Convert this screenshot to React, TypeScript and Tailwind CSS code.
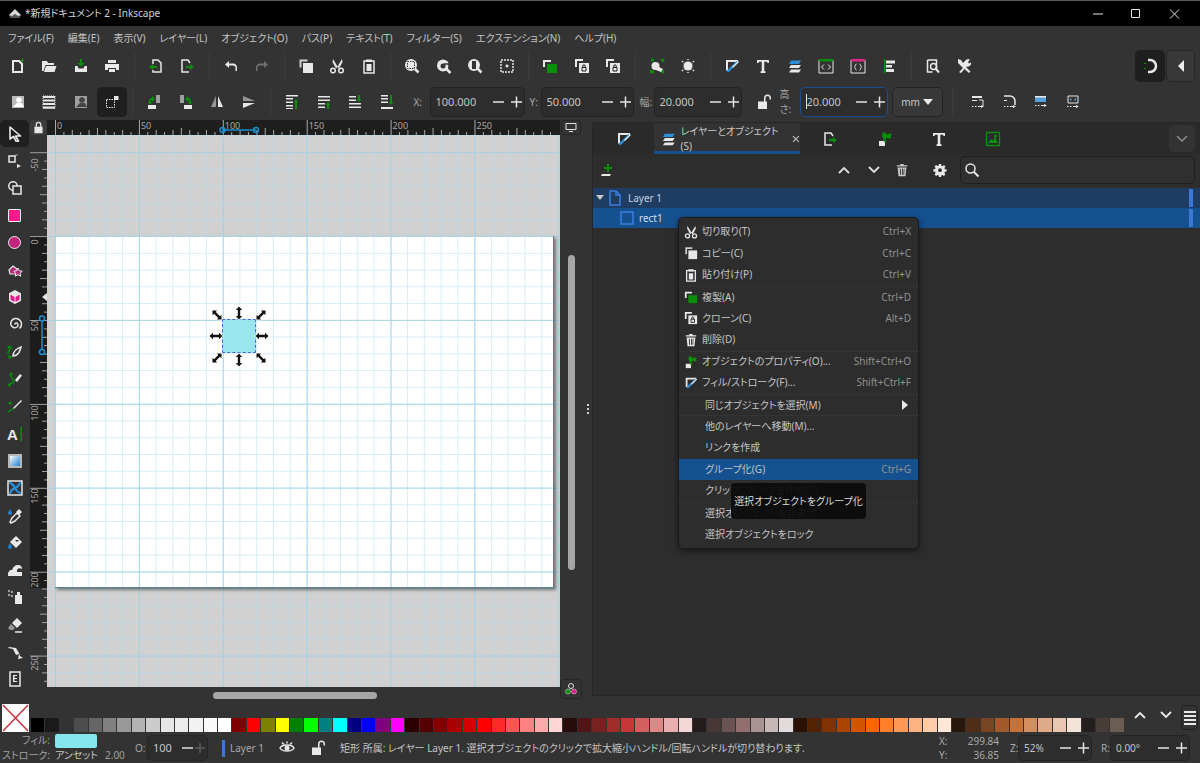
import type { ReactNode } from 'react';

// small 16x16 drawing wrapper, most toolbar icons go through this
function Ico({ children, s = 16, className = 'text-[#e8e8e8]' }: { children: ReactNode; s?: number; className?: string }) {
    return (
        <svg width={s} height={s} viewBox="0 0 16 16" fill="currentColor" className={className}>
            {children}
        </svg>
    );
}

const G = '#0a8f0a';
const line = { fill: 'none', stroke: 'currentColor', strokeWidth: 1.5 };

const icons: Record<string, ReactNode> = {
    newDoc: <><path d="M3 3h6l3 3v8H3z" {...line} strokeWidth={2} /><path d="M12.500 0l.8 1.700 1.700.8-1.700.8-.8 1.700-.8-1.700-1.700-.8 1.700-.8z" fill={G} /></>,
    open: <path d="M1 3h5l1 2h6v2H4.500L2.500 13H1zM5 8h10.500l-2 6H3z" />,
    save: <><path d="M7 1h2v4h2.500L8 8.500 4.500 5H7z" fill={G} /><path d="M2 8h2.500l1 2.500h5l1-2.500H14v6H2z" /></>,
    print: <path d="M4 2h8v3H4zM1 6h14v6h-3v-2H4v2H1zM5 11h6v3H5z" />,
    importDoc: <><path d="M5 6V2h5l3 3v9H5v-2" {...line} /><path d="M1 9l4-3v2h4v2H5v2z" fill={G} /></>,
    exportDoc: <><path d="M11 5l-2-3H3v12h7" {...line} /><path d="M15 9l-4-3v2H7v2h4v2z" fill={G} /></>,
    undo: <path d="M6 3L2 6.500 6 10V7.500h4a2.500 2.500 0 0 1 2.500 2.500v3H14v-3a4 4 0 0 0-4-4.500H6z" />,
    copy: <><path d="M1.500 1.500h8v2H3.500v6h-2z" opacity=".85" /><path d="M5 5h10v10H5z" /></>,
    cut: <><path d="M4 1l4.500 7.500L13 1l.5 3-3.500 6.500L8.500 9 7 10.500 3.500 4z" /><circle cx="4" cy="12.500" r="2.300" {...line} /><circle cx="12" cy="12.500" r="2.300" {...line} /></>,
    paste: <><path d="M3 3h10v12H3z" {...line} /><path d="M5 1.500h6V4H5zM5.500 6h5v7h-5z" /></>,
    zoomSel: <><circle cx="7" cy="7" r="6" /><path d="M10.500 10.500l4 4" {...line} strokeWidth={2.500} /><path d="M3.500 3.500h7v7h-7z" fill="none" stroke="#333" strokeDasharray="1.500 1" /></>,
    zoomDraw: <><circle cx="7" cy="7.500" r="6" /><path d="M10.500 11l4 4" {...line} strokeWidth={2.500} /><circle cx="7" cy="8" r="2.500" fill="#333" /><path d="M8 6h5v5" {...line} stroke="#333" /></>,
    zoomPage: <><circle cx="7" cy="7" r="6" /><path d="M10.500 10.500l4 4" {...line} strokeWidth={2.500} /><path d="M5 3h4v8H5z" fill="#333" /></>,
    zoomCenter: <><path d="M2 2h12v12H2z" {...line} strokeDasharray="2 1" /><path d="M6.500 8h3M8 6.500v3" {...line} /></>,
    dup: <><path d="M1 2h8v2H3v5H1z" /><path d="M5 6h10v9H5z" fill={G} /></>,
    clone: <><path d="M1 1h8v2H3v6H1z" /><path d="M5 5h10v10H5z" /><path d="M8 9.500h4V13H8zM8.800 9.500V8a1.200 1.200 0 0 1 2.400 0v1.500" fill="none" stroke="#222" strokeWidth="1" /></>,
    unclone: <><circle cx="6.500" cy="8" r="4" /><path d="M2 2h3M12 2h2v2M2 12v2h3M12 14h2v-2" stroke={G} strokeWidth="2.500" fill="none" /><path d="M8 8l6 3-2 3-5-2z" /></>,
    groupSel: <><circle cx="8" cy="8" r="4.500" /><path d="M2 3l2 2M14 3l-2 2M2 13l2-2M14 13l-2-2M8 1v1M8 14v1" {...line} strokeDasharray="1.500 1" /></>,
    fillStroke: <><path d="M2 2h12v2H4v8.500H2z" /><path d="M3 14.500l2.500-1L14 4.500 12.500 3 4 11.500z" fill="#2a8fd8" /><path d="M8 9l6-6 1 1-6 6z" /></>,
    text: <path d="M2 2h12v3h-1.500l-.5-1.300H9.300V13l1.200.5V15h-5v-1.500l1.200-.5V3.700H4L3.500 5H2z" />,
    layers: <><path d="M4 2.500h10L12 6H2z" fill="#2a8fd8" /><path d="M4 7h10l-2 3H2zM4 11.500h10L12 14.500H2z" /></>,
    xml: <><path d="M1 2h14v13H1z" {...line} strokeWidth={1} /><path d="M1 1h14v2.500H1z" fill={G} /><path d="M6 6.500L3.500 9 6 11.500M10 6.500L12.500 9 10 11.500" {...line} strokeWidth={1} /></>,
    css: <><path d="M1 2h14v13H1z" {...line} strokeWidth={1} /><path d="M1 1h14v2.500H1z" fill="#e0288a" /><path d="M6.500 6c-1.500 0-1 3-2 3 1 0 .5 3 2 3M9.500 6c1.500 0 1 3 2 3-1 0-.5 3-2 3" {...line} strokeWidth={1} /></>,
    align: <><path d="M3 1h1.500v14H3z" fill={G} /><path d="M5 2.500h9v3H5zM5 7h6v2.500H5zM5 11h8v3H5z" /></>,
    find: <><path d="M2.500 2h9v9" {...line} /><path d="M2.500 2v12h5" {...line} /><circle cx="8.500" cy="8.500" r="3" {...line} /><path d="M10.500 10.500l3.500 4" {...line} strokeWidth={2} /></>,
    prefs: <path d="M2 1l3 1 2 3 2-2c1-2 3-2 5-1.500L12 4l1 1.500 2-1c.5 2-1 4-3 4l-2 .5 4.500 4.500-1.500 1.500L8.500 11l-3 3.500c-1 1-2.500 0-2-1L7 10 4 7 2 5z" />,
    snap: <><path d="M8 2a6 6 0 0 1 0 12" {...line} strokeWidth={2.500} /><path d="M8 2H6M8 14H6" {...line} strokeWidth={2.500} /><path d="M3 5v1M3 10v1" stroke={G} strokeWidth="2" /><text x="1.500" y="10" fontSize="5" fill="#ddd" /></>,
    selectAll: <><path d="M2 2h12v12H2z" opacity=".75" /><circle cx="9" cy="6" r="2.800" fill="#fff" /><path d="M3 13l4-4h5l2 4z" fill="#fff" /></>,
    selectLayer: <><path d="M2 2h12v2H2zM2 5.500h12v2H2zM2 9h12v2H2zM2 12.500h12v2H2z" /><path d="M2 2h12v12.500H2z" fill="none" stroke="#e8e8e8" strokeDasharray="1 1" /></>,
    deselect: <><path d="M2 2h12v12H2z" opacity=".6" /><circle cx="9" cy="6" r="2.800" fill="#444" /><path d="M3 13l4-4h5l2 4z" fill="#444" /></>,
    touch: <><path d="M2.500 5.500h8v8h-8z" fill="none" stroke="currentColor" strokeDasharray="1.500 1" /><path d="M10 2h4.500v4H10z" /></>,
    rotL: <><path d="M10 1h4v8h-4z" opacity=".6" /><path d="M2 11h8v4H2z" /><path d="M3 8.500V7c0-2 1-3 3-3V2l3 3-3 3V6c-1 0-1 .5-1 1v1.500h1.500l-2.500 2-2.500-2z" fill={G} /></>,
    rotR: <><path d="M2 1h4v8H2z" opacity=".6" /><path d="M6 11h8v4H6z" /><path d="M13 8.500V7c0-2-1-3-3-3V2L7 5l3 3V6c1 0 1 .5 1 1v1.500H9.500l2.500 2 2.500-2z" fill={G} /></>,
    flipH: <><path d="M7 2v11H2z" opacity=".55" /><path d="M9 2v11h5z" /></>,
    flipV: <><path d="M2 7h12L2 2z" opacity=".55" /><path d="M2 9h12L2 14z" /></>,
    top: <><path d="M2 1h12v1.500H2zM2 4h7v1.500H2zM2 7.500h7V9H2zM2 11h7v1.500H2zM2 14h7v1H2z" /><path d="M12 5l2.500 3H13v7h-2V8H9.500z" fill={G} /></>,
    up: <><path d="M2 2h12v1.500H2zM2 5.500h12V7H2zM2 9h7v1.500H2zM2 12.500h7V14H2z" /><path d="M12 8l2.500 3H13v4h-2v-4H9.500z" fill={G} /></>,
    down: <><path d="M2 2h7v1.500H2zM2 5.500h7V7H2zM2 9h12v1.500H2zM2 12.500h12V14H2z" /><path d="M12 8L9.500 5H11V1h2v4h1.500z" fill={G} /></>,
    bottom: <><path d="M2 1h7v1.500H2zM2 4h7v1.500H2zM2 7.500h7V9H2zM2 13h12v2H2z" /><path d="M12 11L9.500 8H11V1h2v7h1.500z" fill={G} /></>,
    lock: <path d="M3 7h10v8H3zM4.500 7V4.500a3.500 3.500 0 0 1 7 0V7H10V4.500a2 2 0 0 0-4 0V7z" />,
    unlock: <path d="M2 7.500h9v7.500H2zM8 7.500V4a3.500 3.500 0 0 1 7 0v1.500h-1.500V4a2 2 0 0 0-4 0v3.500z" />,
    scaleA: <><path d="M2 2h10v2H2z" /><path d="M2 6h5v1H2z" /><path d="M9 6h4v6" {...line} strokeWidth={1} /><path d="M2 12h1.500v1H2zM5 12h1.500v1H5zM8 12h3v-1l3 1.500-3 1.500v-1H8z" /></>,
    scaleB: <><path d="M2 2h6a5 5 0 0 1 5 5v4" {...line} /><path d="M2 6h3v1H2zM2 12h1.500v1H2zM5 12h1.500v1H5zM8 12h3v-1l3 1.500-3 1.500v-1H8z" /></>,
    scaleC: <><path d="M2 2h11v6H2z" fill="#5aa0d8" /><path d="M2 2h11v1.500H2z" /><path d="M2 11h1.500v1H2zM5 11h1.500v1H5zM8 11h3v-1l3 1.500-3 1.500v-1H8z" /></>,
    scaleD: <><path d="M3 2h10v7H3z" {...line} strokeWidth={1} /><path d="M5 4l2 1.500L5 7zM11 4L9 5.500 11 7z" fill="#5aa0d8" /><path d="M2 12h1.500v1H2zM5 12h1.500v1H5zM8 12h3v-1l3 1.500-3 1.500v-1H8z" /></>,
    wrench: <><path d="M2 10h6v5H2z" /><path d="M6 1l3 1 1 2 2-1.500 3 .5-1.500 2 1 2-2.500 .5-2-1-1.500 1.500 1 3-2 .5-1-3.500L5 5z" fill={G} /></>,
    image: <><path d="M1.500 1.500h13v13h-13z" fill="none" stroke={G} strokeWidth="1.300" /><path d="M3 12l3-4 2 2 2-4 3 6z" fill={G} /><circle cx="10.500" cy="5" r="1.500" fill={G} /></>,
    addLayer: <><path d="M2 12h9l-1 2H1z" /><path d="M7 2h2v3h3v2H9v3H7V7H4V5h3z" fill={G} /></>,
    trash: <path d="M6 1h4v1.500h4V4H2V2.500h4zM3 5h10l-1 10H4zM5.500 6.500l.4 7h1l-.4-7zM8 6.500v7h1v-7zM10 6.500l-.4 7h.9l.4-7z" fillRule="evenodd" />,
    gear: <path fillRule="evenodd" d="M6.800 1h2.400l.3 2 1.300.6 1.700-1.200 1.700 1.700-1.200 1.700.6 1.300 2 .3v2.400l-2 .3-.6 1.300 1.200 1.700-1.700 1.700-1.700-1.200-1.300.6-.3 2H6.800l-.3-2-1.300-.6-1.700 1.200-1.700-1.700 1.200-1.700-.6-1.300-2-.3V7.200l2-.3.6-1.300-1.200-1.700 1.700-1.700 1.700 1.200 1.300-.6zM8 6a2.200 2.200 0 1 0 0 4.400A2.200 2.200 0 0 0 8 6z" />,
    search: <><circle cx="6.500" cy="6.500" r="4.500" {...line} /><path d="M10 10l4.500 4.500" {...line} strokeWidth={2} /></>,
    eye: <><path d="M1 8c2-4 12-4 14 0-2 4-12 4-14 0z" {...line} /><circle cx="8" cy="8" r="2.500" /><path d="M3 2.500l2 2M8 1.500v2M13 2.500l-2 2" {...line} /></>,
    pointer: <path d="M3 1l10.500 9H8.500l3 5-2 1-3-5.500L3 13z" fill="none" stroke="currentColor" strokeWidth="1.600" strokeLinejoin="round" />,
    node: <><path d="M2 3h6v6H2z" {...line} /><path d="M11 2c-2 0-3 0-3 1" {...line} strokeWidth={1} opacity=".7" /><path d="M10 11l4 2-4 2z" /></>,
    tweak: <><circle cx="6" cy="6" r="4.200" {...line} /><path d="M6 6h8v8H6z" fill="#333" stroke="currentColor" strokeWidth="1.500" /></>,
    star: <><path d="M2 8l4-4 4 3v5H3z" fill="#b02a77" stroke="#e8e8e8" strokeWidth="1.200" /><path d="M11 6l1.300 2.800 3 .4-2.200 2 .6 3-2.700-1.500-2.700 1.500.6-3-2.200-2 3-.4z" fill="#b02a77" stroke="#e8e8e8" strokeWidth="1" /></>,
    box3d: <><path d="M8 1l6 3.300v7.400L8 15l-6-3.300V4.300z" /><path d="M3.500 5.500L7.500 8v5l-4-2.300zM12.500 5.500L8.500 8v5l4-2.300z" fill="#e0188a" /></>,
    spiral: <path d="M8 8.500a1.500 1.500 0 0 1 2-1.500 2.500 2.500 0 0 1 0 4 4 4 0 0 1-6-2 5 5 0 0 1 4-6.500 6 6 0 0 1 6.500 5 6 6 0 0 1-2 5" {...line} />,
    pencil: <><path d="M6 12c0-5 3-7 8-9-1 5-3 9-8 9z" {...line} /><path d="M1 10c0-3 2-5 4-7" {...line} stroke={G} /><circle cx="2" cy="3" r="1.500" fill={G} /><circle cx="3" cy="13" r="1.800" fill={G} /></>,
    pen: <><path d="M8 9l5-6 2 1.500-5 6.500z" /><path d="M2 14c1-3 5-1 5-4S3 8 4 4" {...line} stroke={G} /><circle cx="4" cy="3" r="1.500" fill={G} /><circle cx="2.500" cy="14" r="1.500" fill={G} /></>,
    brush: <><path d="M6 10l8-8 1 1-8 8z" /><path d="M1 14c2-2 3 0 5-4" {...line} stroke={G} /><circle cx="3" cy="5" r="1.500" fill={G} /><path d="M3 5l2 2" stroke={G} /></>,
    bigText: <><text x="0" y="14" fontSize="15" fontWeight="700" fontFamily="Liberation Sans, sans-serif">A</text><path d="M13.500 1h1.500v14h-1.500z" fill={G} /></>,
    mesh: <><path d="M1 1h14v14H1z" {...line} /><path d="M8 8C5 4 4 3 3 3s3 0 5 5zM8 8c3 4 4 5 5 5s-3 0-5-5zM8 8c-4 3-5 4-5 5s0-3 5-5zM8 8c4-3 5-4 5-5s0 3-5 5z" {...line} strokeWidth={2} stroke="#2a8fd8" /></>,
    dropper: <><path d="M8 13l-4 2-1-1 2-4 5-5 3 3z" {...line} /><path d="M9 4l3-3 3 3-3 3z" /><path d="M3 1c1 2 2 3 2 4a2 2 0 0 1-4 0c0-1 1-2 2-4z" fill="#1f7fd0" /></>,
    bucket: <><path d="M9 1l6 6-6 6-6-6z" /><path d="M8 5h4l-2 2z" fill="#333" /><path d="M3 8c1 2 2 3 2 4a2 2 0 0 1-4 0c0-1 1-2 2-4z" fill="#1f7fd0" /></>,
    wave: <path d="M1 14v-3l2-3h2c1-3 3-5 6-5s4 2 4 4c-2-1-4-1-5 1v2h5v4z" />,
    spray: <><path d="M8 6h7v9H8z" /><path d="M10 3h3v3h-3z" /><circle cx="5" cy="3" r="1.200" opacity=".6" /><circle cx="2" cy="6" r="1.200" opacity=".6" /><circle cx="5" cy="7" r="1.200" opacity=".6" /><circle cx="2" cy="2" r="1.200" opacity=".6" /></>,
    eraser: <><path d="M10 1l5 5-5 5-5-5z" /><path d="M4 7l4 4-2 2H3l-2-2z" opacity=".55" /><path d="M8 15h7" {...line} /></>,
    connector: <path d="M1 4l5 1 3 6 3-1-1 5 5-1-3-2-1-3-3-5-7-1z" />,
    pages: <><path d="M3 1h10v14H3z" {...line} /><path d="M6 4h4v1H7.500v2H10v1H7.500v2H10v1H6z" /></>,
    docBlue: <path d="M3 1h6l4 4v10H3zM9 1v4h4" fill="none" stroke="#3a7fe0" strokeWidth="1.500" />,
    rectBlue: <path d="M2 2h12v12H2z" fill="none" stroke="#3a7fe0" strokeWidth="1.500" />,
};

const I = ({ n, className }: { n: string; className?: string }) => <Ico className={className}>{icons[n]}</Ico>;

function Tb({ n, dim }: { n: string; dim?: boolean }) {
    return (
        <div className="flex h-[32px] w-[31.5px] items-center justify-center">
            <I n={n} className={dim ? 'text-[#777777]' : 'text-[#e8e8e8]'} />
        </div>
    );
}

const Sep = () => <div className="mx-[5.5px] h-[28px] w-px bg-[#3d3d3d]" />;

function Spin({ value, className, focus }: { value: string; className: string; focus?: boolean }) {
    return (
        <div className={`flex h-[30px] items-center rounded-[5px] border bg-[#2d2d2d] text-[11px] ${focus ? 'border-[#15508f]' : 'border-[#232323]'} ${className}`}>
            <span className="min-w-0 flex-1 pl-[5px] text-[#c4c4c4]">
                {focus && <span className="border-l border-[#e0e0e0]" />}
                {value}
            </span>
            <svg width="33" height="14" viewBox="0 0 33 14" className="text-[#e4e4e4]">
                <path d="M2 7h11M20 7h11M25.500 1.500v11" stroke="currentColor" strokeWidth="1.500" />
            </svg>
        </div>
    );
}

const menus = ['ファイル(F)', '編集(E)', '表示(V)', 'レイヤー(L)', 'オブジェクト(O)', 'パス(P)', 'テキスト(T)', 'フィルター(S)', 'エクステンション(N)', 'ヘルプ(H)'];

const swatches = [
    '#000000', '#1a1a1a', '#333333', '#4d4d4d', '#666666', '#808080', '#999999', '#b3b3b3', '#cccccc', '#e6e6e6', '#ececec', '#f2f2f2', '#f9f9f9', '#ffffff',
    '#800000', '#ff0000', '#808000', '#ffff00', '#008000', '#00ff00', '#008080', '#00ffff', '#000080', '#0000ff', '#800080', '#ff00ff',
    '#2b0000', '#550000', '#800000', '#aa0000', '#d40000', '#ff0000', '#ff2a2a', '#ff5555', '#ff8080', '#ffaaaa', '#ffd5d5',
    '#280b0b', '#501616', '#782121', '#a02c2c', '#c83737', '#d35f5f', '#de8787', '#e9afaf', '#f4d7d7',
    '#241c1c', '#483737', '#6c5353', '#916f6f', '#ac9393', '#c8b7b7', '#e3dbdb',
    '#2b1100', '#552200', '#803300', '#aa4400', '#d45500', '#ff6600', '#ff7f2a', '#ff9955', '#ffb380', '#ffccaa', '#ffe6d5',
    '#28170b', '#502d16', '#784421', '#a05a2c', '#c87137', '#d38d5f', '#deaa87', '#e9c6af', '#f4e3d7',
    '#241f1c', '#483e37', '#6c5d53',
];

const tools = ['node', 'tweak', '', '', 'star', 'box3d', 'spiral', 'pencil', 'pen', 'brush', 'bigText', '', 'mesh', 'dropper', 'bucket', 'wave', 'spray', 'eraser', 'connector', 'pages'];

const menuItems: { label: string; key?: string; icon?: string; sub?: boolean; hl?: boolean; sep?: boolean }[] = [
    { label: '切り取り(T)', key: 'Ctrl+X', icon: 'cut' },
    { label: 'コピー(C)', key: 'Ctrl+C', icon: 'copy' },
    { label: '貼り付け(P)', key: 'Ctrl+V', icon: 'paste' },
    { label: '複製(A)', key: 'Ctrl+D', icon: 'dup', sep: true },
    { label: 'クローン(C)', key: 'Alt+D', icon: 'clone' },
    { label: '削除(D)', icon: 'trash' },
    { label: 'オブジェクトのプロパティ(O)...', key: 'Shift+Ctrl+O', icon: 'wrench', sep: true },
    { label: 'フィル/ストローク(F)...', key: 'Shift+Ctrl+F', icon: 'fillStroke' },
    { label: '同じオブジェクトを選択(M)', sub: true, sep: true },
    { label: '他のレイヤーへ移動(M)...', sep: true },
    { label: 'リンクを作成' },
    { label: 'グループ化(G)', key: 'Ctrl+G', hl: true },
    { label: 'クリップグループを作成(R)' },
    { label: '選択オブジェクトを非表示', sep: true },
    { label: '選択オブジェクトをロック' },
];

const handleSpots = [
    { x: 8, y: 9, r: 45 }, { x: 30, y: 7, r: 90 }, { x: 52, y: 9, r: 135 },
    { x: 7, y: 30, r: 0 }, { x: 53, y: 30, r: 0 },
    { x: 8, y: 52, r: 135 }, { x: 30, y: 54, r: 90 }, { x: 52, y: 52, r: 45 },
];

const arrow = 'M-6.500 0L-3 -3.200V-1.200H3V-3.200L6.500 0L3 3.200V1.200H-3V3.200Z';

function TopRuler() {
    const ticks = Array.from({ length: 60 }, (_, i) => i);
    return (
        <svg width="513" height="15" className="block bg-[#1e1e1e]">
            {ticks.map(i => {
                const x = 8 + i * 8.39;
                const h = i % 10 === 0 ? 15 : i % 5 === 0 ? 7 : i % 2 === 0 ? 5 : 3;
                return <rect key={i} x={x} y={15 - h} width="1" height={h} fill="#a9a9a9" />;
            })}
            {[0, 50, 100, 150, 200, 250].map((v, i) => (
                <text key={v} x={10 + i * 83.9} y="9" fontSize="9" fill="#a8a8a8">{v}</text>
            ))}
            <path d="M175 10h34" stroke="#1a8fd0" strokeWidth="1.500" />
            <circle cx="175.500" cy="10" r="2.500" fill="none" stroke="#1a8fd0" strokeWidth="1.500" />
            <circle cx="209" cy="10" r="2.500" fill="none" stroke="#1a8fd0" strokeWidth="1.500" />
        </svg>
    );
}

function SideRuler() {
    const ticks = Array.from({ length: 66 }, (_, i) => i);
    return (
        <svg width="17" height="552" className="block bg-[#333333]">
            <rect x="0" y="101" width="17" height="352" fill="#1c1c1c" />
            {ticks.map(i => {
                const y = 17.200 + i * 8.39;
                const w = i % 10 === 0 ? 17 : i % 5 === 0 ? 7 : i % 2 === 0 ? 5 : 3;
                return <rect key={i} x={17 - w} y={y} width={w} height="1" fill="#a0a0a0" />;
            })}
            {[['-50', 30], ['0', 107], ['50', 191], ['100', 278], ['150', 361], ['200', 445], ['250', 528]].map(([v, y]) => (
                <text key={v} x="0" y="0" fontSize="9" fill="#a8a8a8" textAnchor="middle" transform={`translate(8 ${y}) rotate(-90)`}>{v}</text>
            ))}
            <path d="M12 162l5-4v8z" fill="#e4e4e4" />
            <path d="M12 183v34" stroke="#1a8fd0" strokeWidth="1.500" />
            <circle cx="12" cy="183.500" r="2.500" fill="#1c1c1c" stroke="#1a8fd0" strokeWidth="1.500" />
            <circle cx="12" cy="217" r="2.500" fill="#1c1c1c" stroke="#1a8fd0" strokeWidth="1.500" />
        </svg>
    );
}

export default function App() {
    return (
        <div className="relative flex h-[763px] w-[1200px] flex-col overflow-hidden bg-[#333333] font-['Noto_Sans','Noto_Sans_CJK_JP',sans-serif] text-[10px] text-[#c8c8c8] [font-feature-settings:'palt']">
            {/* title bar */}
            <div className="flex h-[26px] shrink-0 items-center border-t border-[#5a5a5a] bg-black pl-[9px]">
                <svg width="12" height="10" viewBox="0 0 12 10"><path d="M6 0l6 6-2 3H2L0 6z" fill="#d8d8d8" /><path d="M0 6l2 3h8l2-3-3 1-3-2-3 2z" fill="#555555" /></svg>
                <span className="ml-[4px] text-[10px] text-[#d4d4d4]">*新規ドキュメント 2 - Inkscape</span>
                <svg width="92" height="14" viewBox="0 0 92 14" className="ml-auto mr-[15px] text-[#e8e8e8]">
                    <path d="M0 7h10M38.500 2.500h8v8h-8zM77 2.500l9 9M86 2.500l-9 9" fill="none" stroke="currentColor" strokeWidth="1" />
                </svg>
            </div>

            {/* menu */}
            <div className="flex h-[24px] shrink-0 items-center gap-[14px] pl-[8px] text-[10px] text-[#c4c4c4]">
                {menus.map(m => <span key={m}>{m}</span>)}
            </div>

            {/* command bar */}
            <div className="flex h-[32px] shrink-0 items-center pl-[2px]">
                {['newDoc', 'open', 'save', 'print'].map(n => <Tb key={n} n={n} />)}
                <Sep />
                <Tb n="importDoc" /><Tb n="exportDoc" />
                <Sep />
                <Tb n="undo" />
                <div className="flex h-[32px] w-[31.5px] items-center justify-center"><svg width="16" height="16" viewBox="0 0 16 16" className="-scale-x-100 text-[#6e6e6e]" fill="currentColor">{icons.undo}</svg></div>
                <Sep />
                <Tb n="copy" /><Tb n="cut" /><Tb n="paste" />
                <Sep />
                <Tb n="zoomSel" /><Tb n="zoomDraw" /><Tb n="zoomPage" /><Tb n="zoomCenter" />
                <Sep />
                <Tb n="dup" /><Tb n="clone" /><Tb n="clone" />
                <Sep />
                <Tb n="unclone" /><Tb n="groupSel" />
                <Sep />
                <Tb n="fillStroke" /><Tb n="text" /><Tb n="layers" /><Tb n="xml" /><Tb n="css" /><Tb n="align" />
                <Sep />
                <Tb n="find" /><Tb n="prefs" />
                <div className="ml-auto mr-[5px] flex gap-px">
                    <div className="flex h-[32px] w-[30px] items-center justify-center rounded-[5px] bg-[#1f1f1f]"><I n="snap" /></div>
                    <div className="flex h-[32px] w-[29px] items-center justify-center rounded-[5px] border border-[#262626] bg-[#383838]">
                        <svg width="8" height="12" viewBox="0 0 8 12"><path d="M7 0v12L1 6z" fill="#eeeeee" /></svg>
                    </div>
                </div>
            </div>

            {/* tool controls */}
            <div className="flex h-[38px] shrink-0 items-center pl-[2px] pt-[2px]">
                <Tb n="selectAll" /><Tb n="selectLayer" /><Tb n="deselect" />
                <div className="flex h-[30px] w-[30px] items-center justify-center rounded-[5px] bg-[#1f1f1f]"><I n="touch" /></div>
                <Sep />
                <Tb n="rotL" /><Tb n="rotR" /><Tb n="flipH" /><Tb n="flipV" />
                <Sep />
                <Tb n="top" /><Tb n="up" /><Tb n="down" /><Tb n="bottom" />
                <span className="ml-[11px] w-[16px] text-[10px] text-[#a8a8a8]">X:</span>
                <Spin value="100.000" className="w-[95px]" />
                <span className="ml-[5px] w-[11px] text-[10px] text-[#a8a8a8]">Y:</span>
                <Spin value="50.000" className="w-[93px]" />
                <span className="ml-[6px] w-[14px] text-[10px] text-[#a8a8a8]">幅:</span>
                <Spin value="20.000" className="w-[88px]" />
                <div className="ml-[12px] flex w-[20px] justify-center"><I n="unlock" /></div>
                <span className="ml-[6px] w-[20px] text-[10px] text-[#a8a8a8]">高さ:</span>
                <Spin value="20.000" focus className="w-[88px]" />
                <div className="ml-[4px] flex h-[30px] w-[51px] items-center justify-center gap-[3px] rounded-[5px] border border-[#232323] bg-[#383838] text-[10px]">
                    mm
                    <svg width="10" height="6" viewBox="0 0 10 6"><path d="M0 0h10L5 6z" fill="#e8e8e8" /></svg>
                </div>
                <div className="ml-[9px] mr-[10px] h-[28px] w-px bg-[#3d3d3d]" />
                <Tb n="scaleA" /><Tb n="scaleB" /><Tb n="scaleC" /><Tb n="scaleD" />
            </div>

            {/* main area */}
            <div className="flex min-h-0 flex-1">
                {/* tool column */}
                <div className="flex w-[29px] shrink-0 flex-col">
                    <div className="flex h-[27px] w-[29px] items-center justify-center rounded-[5px] bg-[#1f1f1f]"><I n="pointer" /></div>
                    {tools.map((n, i) => (
                        <div key={i} className="flex h-[27.3px] items-center justify-center">
                            {i === 2 && <div className="h-[13px] w-[13px] rounded-[1px] border border-[#eeeeee] bg-[#ff1a8c]" />}
                            {i === 3 && <div className="h-[13px] w-[13px] rounded-full border border-[#eeeeee] bg-[#c2257b]" />}
                            {i === 11 && <div className="h-[14px] w-[14px] border-2 border-[#b8b8b8] bg-[linear-gradient(135deg,#ffffff,#1f7fd0)]" />}
                            {n && <I n={n} />}
                        </div>
                    ))}
                </div>

                {/* canvas block */}
                <div className="ml-px flex w-[530px] shrink-0 flex-col">
                    <div className="flex h-[15px] shrink-0">
                        <div className="flex w-[17px] items-center justify-center rounded-[3px] bg-[#3c3c3c]"><Ico s={13}>{icons.lock}</Ico></div>
                        <TopRuler />
                    </div>
                    <div className="flex h-[552px] shrink-0">
                        <SideRuler />
                        <div className="relative w-[513px] bg-[#d1d1d1] [background-image:linear-gradient(to_right,#a8cfe0_1px,transparent_1px),linear-gradient(to_bottom,#a8cfe0_1px,transparent_1px),linear-gradient(to_right,#bfd8e3_1px,transparent_1px),linear-gradient(to_bottom,#bfd8e3_1px,transparent_1px)] [background-position:8px_17.200px,8px_17.200px,8px_0.400px,8px_0.400px] [background-size:83.900px_83.900px,83.900px_83.900px,16.780px_16.780px,16.780px_16.780px]">
                            {/* the page sits on the free canvas */}
                            <div className="absolute left-[8px] top-[101px] h-[352px] w-[499px] border-r border-b border-[#5d7f90] bg-white shadow-[2px_2px_3px_rgba(0,0,0,0.45)] [background-image:linear-gradient(to_right,#a9d8ec_1px,transparent_1px),linear-gradient(to_bottom,#a9d8ec_1px,transparent_1px),linear-gradient(to_right,#d6edf7_1px,transparent_1px),linear-gradient(to_bottom,#d6edf7_1px,transparent_1px)] [background-size:83.900px_83.900px,83.900px_83.900px,16.780px_16.780px,16.780px_16.780px]">
                                <div className="absolute left-[167px] top-[83px] h-[34px] w-[34px] border border-dashed border-[#4a63d8] bg-[#99e6ee]" />
                                <svg width="60" height="60" className="absolute left-[154px] top-[70px]">
                                    {handleSpots.map((h, i) => (
                                        <g key={i} transform={`translate(${h.x} ${h.y}) rotate(${h.r})`}>
                                            <path d={arrow} fill="#111111" stroke="#ffffff" strokeWidth="1.500" paintOrder="stroke" />
                                        </g>
                                    ))}
                                </svg>
                            </div>
                        </div>
                    </div>
                    <div className="flex flex-1 items-center pl-[183px]">
                        <div className="h-[7px] w-[164px] rounded-full bg-[#a6a6a6]" />
                    </div>
                </div>

                {/* vertical scrollbar and sash */}
                <div className="flex w-[32px] shrink-0">
                    <div className="flex w-[22px] flex-col items-center">
                        <div className="flex h-[15px] w-[20px] items-center justify-center rounded-[3px] border border-[#262626]">
                            <svg width="12" height="9" viewBox="0 0 12 9"><path d="M1 .5h10v6H1zM4 8.500h4" fill="none" stroke="#e0e0e0" /></svg>
                        </div>
                        <div className="mt-[120px] h-[315px] w-[7px] rounded-full bg-[#a6a6a6]" />
                        <div className="mt-[109px] flex h-[20px] w-[22px] items-center justify-center rounded-[4px] border border-[#262626]">
                            <svg width="14" height="14" viewBox="0 0 14 14"><circle cx="7" cy="4" r="2.500" fill="none" stroke="#e0e0e0" /><circle cx="4" cy="9.500" r="2.500" fill="#0a8f0a" stroke="#e0e0e0" strokeWidth=".5" /><circle cx="10" cy="9.500" r="2.500" fill="#e0188a" stroke="#e0e0e0" strokeWidth=".5" /></svg>
                        </div>
                    </div>
                    <div className="flex flex-1 flex-col items-center justify-center gap-[2px] pb-[5px] pl-[2px]">
                        <div className="h-[2px] w-[2px] bg-[#d0d0d0]" /><div className="h-[2px] w-[2px] bg-[#d0d0d0]" /><div className="h-[2px] w-[2px] bg-[#d0d0d0]" />
                    </div>
                </div>

                {/* docked panel */}
                <div className="ml-px mt-[3px] mb-[8px] flex min-w-0 flex-1 flex-col bg-[#2d2d2d] shadow-[0_0_0_1px_#262626]">
                    <div className="flex h-[31px] shrink-0 items-stretch bg-[#2a2a2a]">
                        <div className="flex w-[61px] items-center justify-center"><I n="fillStroke" /></div>
                        <div className="flex w-[146px] items-center border-b-[3px] border-[#15508f] bg-[#333333] pl-[7px] pt-[3px] text-[10px] text-[#c8c8c8]">
                            <I n="layers" />
                            <span className="ml-[4px]">レイヤーとオブジェクト(S)</span>
                            <svg width="8" height="8" viewBox="0 0 8 8" className="ml-[5px]"><path d="M1 1l6 6M7 1L1 7" stroke="#b8b8b8" strokeWidth="1.300" /></svg>
                        </div>
                        <div className="flex w-[60px] items-center justify-center"><I n="exportDoc" /></div>
                        <div className="flex w-[50px] items-center justify-center"><I n="wrench" /></div>
                        <div className="flex w-[58px] items-center justify-center"><I n="text" /></div>
                        <div className="flex w-[50px] items-center justify-center"><I n="image" /></div>
                        <div className="my-[2px] ml-auto mr-[5px] flex w-[26px] items-center justify-center rounded-[5px] bg-[#333333]">
                            <svg width="12" height="7" viewBox="0 0 12 7"><path d="M1 1l5 5 5-5" fill="none" stroke="#8a8a8a" strokeWidth="1.500" /></svg>
                        </div>
                    </div>
                    <div className="flex h-[32px] shrink-0 items-center">
                        <div className="ml-[7px]"><I n="addLayer" /></div>
                        <div className="ml-auto flex items-center">
                            <svg width="12" height="8" viewBox="0 0 12 8"><path d="M1 7l5-5 5 5" fill="none" stroke="#e0e0e0" strokeWidth="1.800" /></svg>
                            <svg width="12" height="8" viewBox="0 0 12 8" className="ml-[18px]"><path d="M1 1l5 5 5-5" fill="none" stroke="#e0e0e0" strokeWidth="1.800" /></svg>
                            <div className="ml-[15px]"><Ico s={14} className="text-[#c8c8c8]">{icons.trash}</Ico></div>
                            <div className="ml-[24px]"><Ico s={14}>{icons.gear}</Ico></div>
                            <div className="ml-[13px] mr-[5px] flex h-[28px] w-[235px] items-center rounded-[5px] border border-[#1f1f1f] bg-[#2f2f2f] pl-[3px]"><I n="search" /></div>
                        </div>
                    </div>
                    <div className="mt-[2px] flex h-[20px] shrink-0 items-center bg-[#1f3d63] pl-[3px] pr-[7px]">
                        <svg width="9" height="6" viewBox="0 0 9 6"><path d="M0 0h8L4 5z" fill="#c8c8c8" /></svg>
                        <div className="ml-[2px]"><I n="docBlue" /></div>
                        <span className="ml-[5px] text-[10px] text-[#c4d0e0]">Layer 1</span>
                        <div className="ml-auto h-[18px] w-[4px] bg-[#3a78d8]" />
                    </div>
                    <div className="flex h-[20px] shrink-0 items-center bg-[#15508f] pl-[26px] pr-[7px]">
                        <I n="rectBlue" />
                        <span className="ml-[4px] text-[10px] text-[#d4dfec]">rect1</span>
                        <div className="ml-auto h-[18px] w-[4px] bg-[#3a78d8]" />
                    </div>
                </div>
            </div>

            {/* palette */}
            <div className="flex h-[30px] shrink-0 items-end pb-px pl-[2px]">
                <svg width="27" height="28" viewBox="0 0 27 28" className="block bg-white"><path d="M1 1l25 26M26 1L1 27" stroke="#c8323c" strokeWidth="1.500" /></svg>
                <div className="ml-[2px] flex">
                    {swatches.map((c, i) => <div key={i} className="h-[14px] w-[14.400px] border-r border-[#333333]" style={{ backgroundColor: c }} />)}
                </div>
                <div className="ml-auto flex items-center self-stretch pr-[2px]">
                    <svg width="12" height="8" viewBox="0 0 12 8" className="mb-[6px]"><path d="M1 7l5-5 5 5" fill="none" stroke="#e8e8e8" strokeWidth="1.800" /></svg>
                    <svg width="12" height="8" viewBox="0 0 12 8" className="mb-[6px] ml-[14px]"><path d="M1 1l5 5 5-5" fill="none" stroke="#e8e8e8" strokeWidth="1.800" /></svg>
                    <div className="ml-[9px] flex h-[25px] w-[17px] flex-col items-center justify-center gap-[2px] rounded-[4px] border border-[#1f1f1f]">
                        <div className="h-[2px] w-[12px] bg-[#e8e8e8]" /><div className="h-[2px] w-[12px] bg-[#e8e8e8]" /><div className="h-[2px] w-[12px] bg-[#e8e8e8]" /><div className="h-[2px] w-[12px] bg-[#e8e8e8]" />
                    </div>
                </div>
            </div>

            {/* status bar */}
            <div className="flex h-[30px] shrink-0 items-center text-[10px]">
                <div className="grid w-[131px] shrink-0 grid-cols-[48px_45px_auto] items-center gap-x-[5px] pl-[2px]">
                    <span className="justify-self-end text-[#a0a0a0]">フィル:</span>
                    <div className="h-[14px] w-[42px] rounded-[2px] bg-[#85e6ee]" />
                    <span />
                    <span className="text-right text-[#a0a0a0]">ストローク:</span>
                    <span className="text-[#c8c8c8]">アンセット</span>
                    <span className="text-[#a0a0a0]">2.00</span>
                </div>
                <span className="ml-[4px] w-[12px] text-[#a0a0a0]">O:</span>
                <div className="flex h-[26px] w-[61px] items-center rounded-[5px] border border-[#262626] bg-[#2d2d2d] text-[11px]">
                    <span className="flex-1 pl-[5px]">100</span>
                    <svg width="26" height="14" viewBox="0 0 26 14"><path d="M1 7h11" stroke="#e0e0e0" strokeWidth="1.500" /><path d="M14 7h10M19 2v10" stroke="#5c5c5c" strokeWidth="1.500" /></svg>
                </div>
                <div className="ml-[14px] h-[17px] w-[3px] bg-[#3a78d8]" />
                <span className="ml-[5px] text-[10px] text-[#a8a8a8]">Layer 1</span>
                <div className="ml-[15px]"><I n="eye" /></div>
                <div className="ml-[15px]"><I n="unlock" /></div>
                <span className="ml-[14px] text-[#c4c4c4]">矩形 所属: レイヤー Layer 1. 選択オブジェクトのクリックで拡大縮小ハンドル/回転ハンドルが切り替わります.</span>
                <div className="ml-auto grid w-[60px] shrink-0 grid-cols-[auto_1fr] text-[10px] leading-[14px] text-[#a8a8a8]">
                    <span>X:</span><span className="text-right">299.84</span>
                    <span>Y:</span><span className="text-right">36.85</span>
                </div>
                <span className="ml-[11px] w-[7px] text-[#a8a8a8]">Z:</span>
                <Spin value="52%" className="ml-px !h-[26px] w-[74px] !text-[10px]" />
                <span className="ml-[9px] w-[9px] text-[#a8a8a8]">R:</span>
                <Spin value="0.00°" className="!h-[26px] w-[80px] !text-[10px]" />
                <div className="w-[10px]" />
            </div>

            {/* context menu, floats over the panel */}
            <div className="absolute left-[678px] top-[217px] w-[241px] rounded-[5px] border border-[#1b1b1b] bg-[#2d2d2d] py-[3px] text-[10px] text-[#c4c4c4] shadow-[0_2px_6px_rgba(0,0,0,0.5)]">
                {menuItems.map(m => (
                    <div key={m.label} className={`flex h-[21.600px] items-center pr-[7px] ${m.hl ? 'bg-[#15508f]' : ''} ${m.sep ? 'border-t border-[#343434]' : ''}`}>
                        <div className="flex w-[23px] shrink-0 justify-center pl-[1px]">
                            {m.icon && <Ico s={14}>{icons[m.icon]}</Ico>}
                        </div>
                        <span className={m.icon ? '' : 'pl-[3px]'}>{m.label}</span>
                        {m.key && <span className="ml-auto text-[#909090]">{m.key}</span>}
                        {m.sub && <svg width="6" height="10" viewBox="0 0 6 10" className="ml-auto mr-[3px]"><path d="M0 0l6 5-6 5z" fill="#e8e8e8" /></svg>}
                    </div>
                ))}
            </div>

            {/* tooltip */}
            <div className="absolute left-[731px] top-[483px] flex h-[36px] w-[135px] items-center justify-center rounded-[4px] bg-[#0c0c0c]/95 text-[10px] text-[#d8d8d8]">
                選択オブジェクトをグループ化
            </div>
        </div>
    );
}
